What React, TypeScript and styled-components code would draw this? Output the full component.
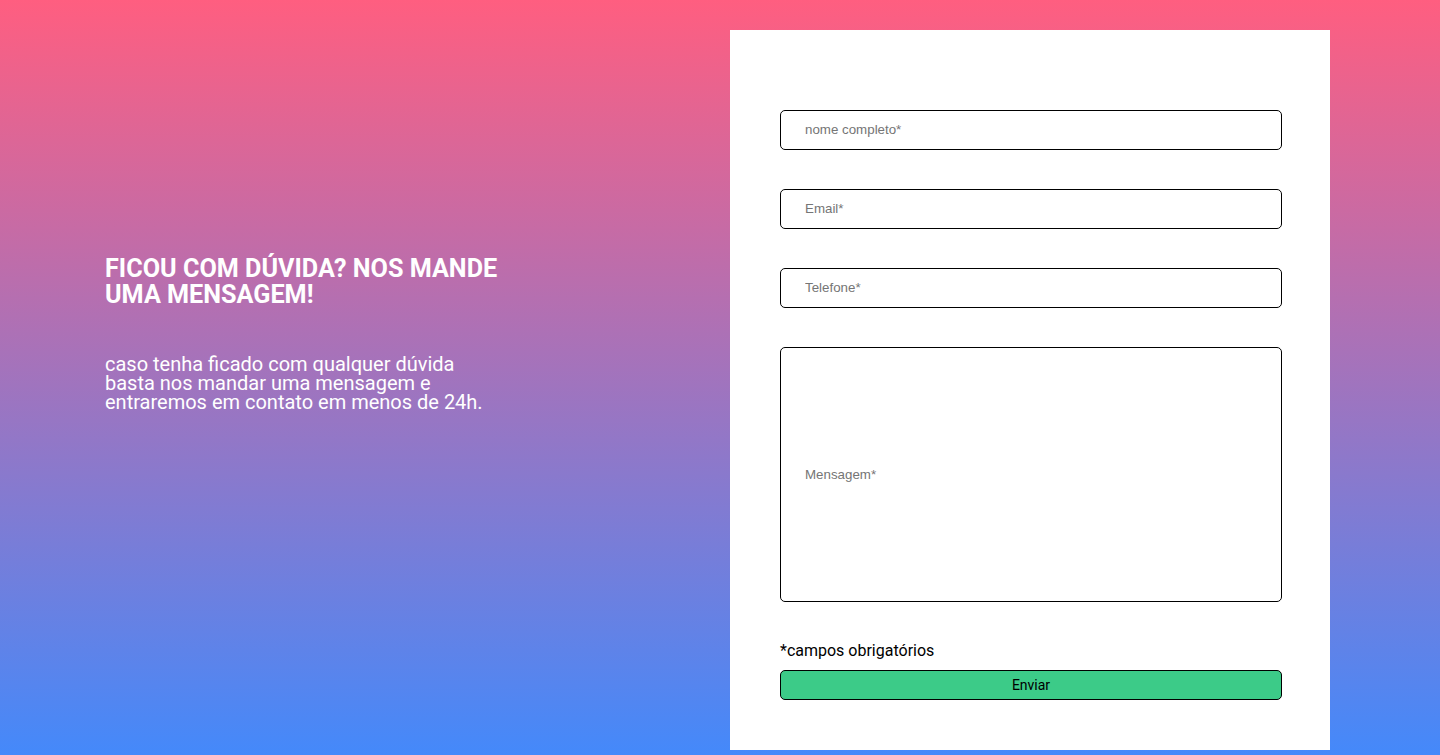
import styled, { createGlobalStyle } from 'styled-components'

const GlobalStyle = createGlobalStyle`
  html, body {
    margin: 0;
    padding: 0;
  }
  * {
    box-sizing: border-box;
  }
`

const Page = styled.div`
  min-height: 755px;
  width: 100%;
  display: flex;
  flex-direction: row;
  align-items: flex-start;
  padding: 30px 110px 5px 105px;
  background: linear-gradient(180deg, #ff5e80 0%, #4489fa 100%);
  font-family: Roboto, 'Liberation Sans', sans-serif;
`
const Intro = styled.div`
  width: 410px;
  display: flex;
  flex-direction: column;
  gap: 47px;
  padding-top: 226px;
  color: #fff;
`
const Title = styled.h1`
  margin: 0;
  font-size: 25.2px;
  line-height: 26px;
  font-weight: 700;
  text-transform: uppercase;
`
const Text = styled.p`
  margin: 0;
  width: 390px;
  font-size: 20px;
  line-height: 19px;
  font-weight: 400;
`
const Card = styled.form`
  margin-left: auto;
  width: 600px;
  height: 720px;
  background-color: #fff;
  display: flex;
  flex-direction: column;
  padding: 80px 48px 0px 50px;
`
const Fields = styled.div`
  display: flex;
  flex-direction: column;
  gap: 39px;
`
const Field = styled.input<{ $tall?: boolean }>`
  width: 502px;
  height: ${(p) => (p.$tall ? '255px' : '40px')};
  border: 1px solid #000;
  border-radius: 5px;
  padding: ${(p) => (p.$tall ? '0 24px' : '0 24px 2px')};
  font-family: 'Liberation Sans', Arial, sans-serif;
  font-size: 13.33px;
  color: #000;
  background: #fff;
  outline: none;
  &::placeholder {
    color: #757575;
  }
`
const Required = styled.span`
  margin-top: 39px;
  font-size: 16px;
  line-height: 19px;
  color: #000;
`
const Submit = styled.button`
  margin-top: 10px;
  width: 502px;
  height: 30px;
  border: 1px solid #000;
  border-radius: 5px;
  background-color: #3ccb88;
  font-family: Roboto, 'Liberation Sans', sans-serif;
  font-size: 14px;
  color: #000;
  cursor: pointer;
`

const App = () => {
  return (
    <>
      <GlobalStyle />
      <Page>
        <Intro>
          <Title>Ficou com dúvida? Nos mande uma mensagem!</Title>
          <Text>
            caso tenha ficado com qualquer dúvida basta nos mandar uma mensagem
            e entraremos em contato em menos de 24h.
          </Text>
        </Intro>
        <Card onSubmit={(e) => e.preventDefault()}>
          <Fields>
            <Field type="text" placeholder="nome completo*" />
            <Field type="email" placeholder="Email*" />
            <Field type="tel" placeholder="Telefone*" />
            <Field $tall type="text" placeholder="Mensagem*" />
          </Fields>
          <Required>*campos obrigatórios</Required>
          <Submit type="submit">Enviar</Submit>
        </Card>
      </Page>
    </>
  )
}

export default App
